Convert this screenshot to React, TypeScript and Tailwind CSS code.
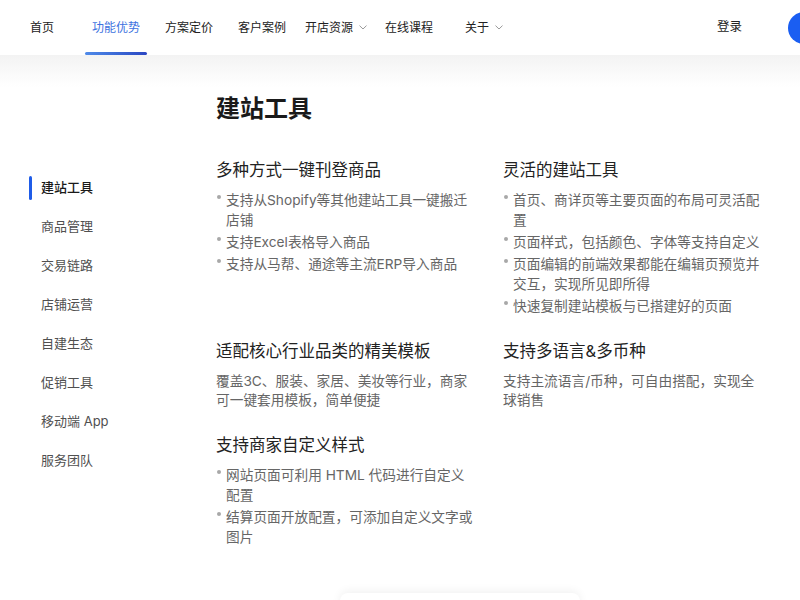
import React from "react";

const navItems = [
  { label: "首页", cls: "ml-0" },
  { label: "功能优势", cls: "ml-[38px]", active: true },
  { label: "方案定价", cls: "ml-[25px]" },
  { label: "客户案例", cls: "ml-[25px]" },
  { label: "开店资源", cls: "ml-[19px]", more: true },
  { label: "在线课程", cls: "ml-[18px]" },
  { label: "关于", cls: "ml-[32px]", more: true },
];

const sideItems = ["建站工具", "商品管理", "交易链路", "店铺运营", "自建生态", "促销工具", "移动端 App", "服务团队"];

const Chevron = () => (
  <svg className="ml-[6px] w-[8px] h-[5px]" viewBox="0 0 8 5" fill="none">
    <path d="M0.5 0.6 L4 4 L7.5 0.6" stroke="#9a9a9a" strokeWidth="1" />
  </svg>
);

const Bullets = ({ items }: { items: string[] }) => (
  <ul className="mt-2 flex flex-col gap-[2px]">
    {items.map((t) => (
      <li key={t} className="flex text-[13.7px] leading-5 text-[#666]">
        <span className="w-[10px] shrink-0 pt-[5px] pl-[1px]">
          <span className="block w-[4px] h-[4px] rounded-full bg-[#a8a8a8]" />
        </span>
        <span>{t}</span>
      </li>
    ))}
  </ul>
);

const Feature = ({ title, children }: { title: string; children: React.ReactNode }) => (
  <div>
    <h3 className="text-[16.5px] leading-6 text-[#222]">{title}</h3>
    {children}
  </div>
);

const Para = ({ text }: { text: string }) => (
  <p className="mt-[9px] text-[13.7px] leading-[19px] text-[#666]">{text}</p>
);

export default function App() {
  return (
    <div className="min-h-screen w-full overflow-hidden bg-white font-[Inter,'Noto_Sans_CJK_SC',sans-serif]">
      {/* 顶部导航 */}
      <header className="h-[55px] flex items-center bg-white pl-[30px] overflow-hidden">
        <nav className="flex h-full items-center">
          {navItems.map((n) => (
            <div key={n.label} className={`relative h-full flex items-center text-[12px] ${n.cls}`}>
              <span className={n.active ? "text-[#3d72e0]" : "text-[#222]"}>{n.label}</span>
              {n.more && <Chevron />}
              {n.active && (
                <span className="absolute -left-[7px] -right-[7px] bottom-0 h-[3px] rounded-full bg-gradient-to-r from-[#4f8ae9] to-[#2b46c2]" />
              )}
            </div>
          ))}
        </nav>
        <div className="ml-auto flex items-center shrink-0">
          <span className="text-[12.5px] text-[#222]">登录</span>
          <button aria-label="免费开店" className="ml-[46px] -mr-[88px] w-[100px] h-8 rounded-full bg-[#1a5ef2]" />
        </div>
      </header>

      <main className="flex bg-[linear-gradient(#f3f3f3,#ffffff_32px)]">
        <aside className="w-[216px] shrink-0 pl-[29px] pt-[113px]">
          {sideItems.map((s, i) => (
            <div key={s} className="relative h-[39px] flex items-center">
              {i === 0 && <span className="absolute left-0 top-[7.5px] w-[3px] h-[24px] rounded-sm bg-[#1f5ce8]" />}
              <span className={`pl-[12px] text-[13px] ${i === 0 ? "text-[#1a1a1a] font-medium" : "text-[#505050]"}`}>{s}</span>
            </div>
          ))}
        </aside>

        <section className="pt-[38px] pb-10">
          <h1 className="text-[24px] leading-8 font-semibold text-[#1a1a1a]">建站工具</h1>

          <div className="mt-[33px] grid grid-cols-[258px_258px] gap-x-[29px] gap-y-[23px]">
            <Feature title="多种方式一键刊登商品">
              <Bullets
                items={["支持从Shopify等其他建站工具一键搬迁店铺", "支持Excel表格导入商品", "支持从马帮、通途等主流ERP导入商品"]}
              />
            </Feature>
            <Feature title="灵活的建站工具">
              <Bullets
                items={[
                  "首页、商详页等主要页面的布局可灵活配置",
                  "页面样式，包括颜色、字体等支持自定义",
                  "页面编辑的前端效果都能在编辑页预览并交互，实现所见即所得",
                  "快速复制建站模板与已搭建好的页面",
                ]}
              />
            </Feature>
            <Feature title="适配核心行业品类的精美模板">
              <Para text="覆盖3C、服装、家居、美妆等行业，商家可一键套用模板，简单便捷" />
            </Feature>
            <Feature title="支持多语言&多币种">
              <Para text="支持主流语言/币种，可自由搭配，实现全球销售" />
            </Feature>
            <Feature title="支持商家自定义样式">
              <Bullets items={["网站页面可利用 HTML 代码进行自定义配置", "结算页面开放配置，可添加自定义文字或图片"]} />
            </Feature>
          </div>

          <div className="mt-[46px] ml-[124px] w-[240px] h-[60px] rounded-lg bg-white shadow-[0_-2px_10px_rgba(0,0,0,0.06)]" />
        </section>
      </main>
    </div>
  );
}
